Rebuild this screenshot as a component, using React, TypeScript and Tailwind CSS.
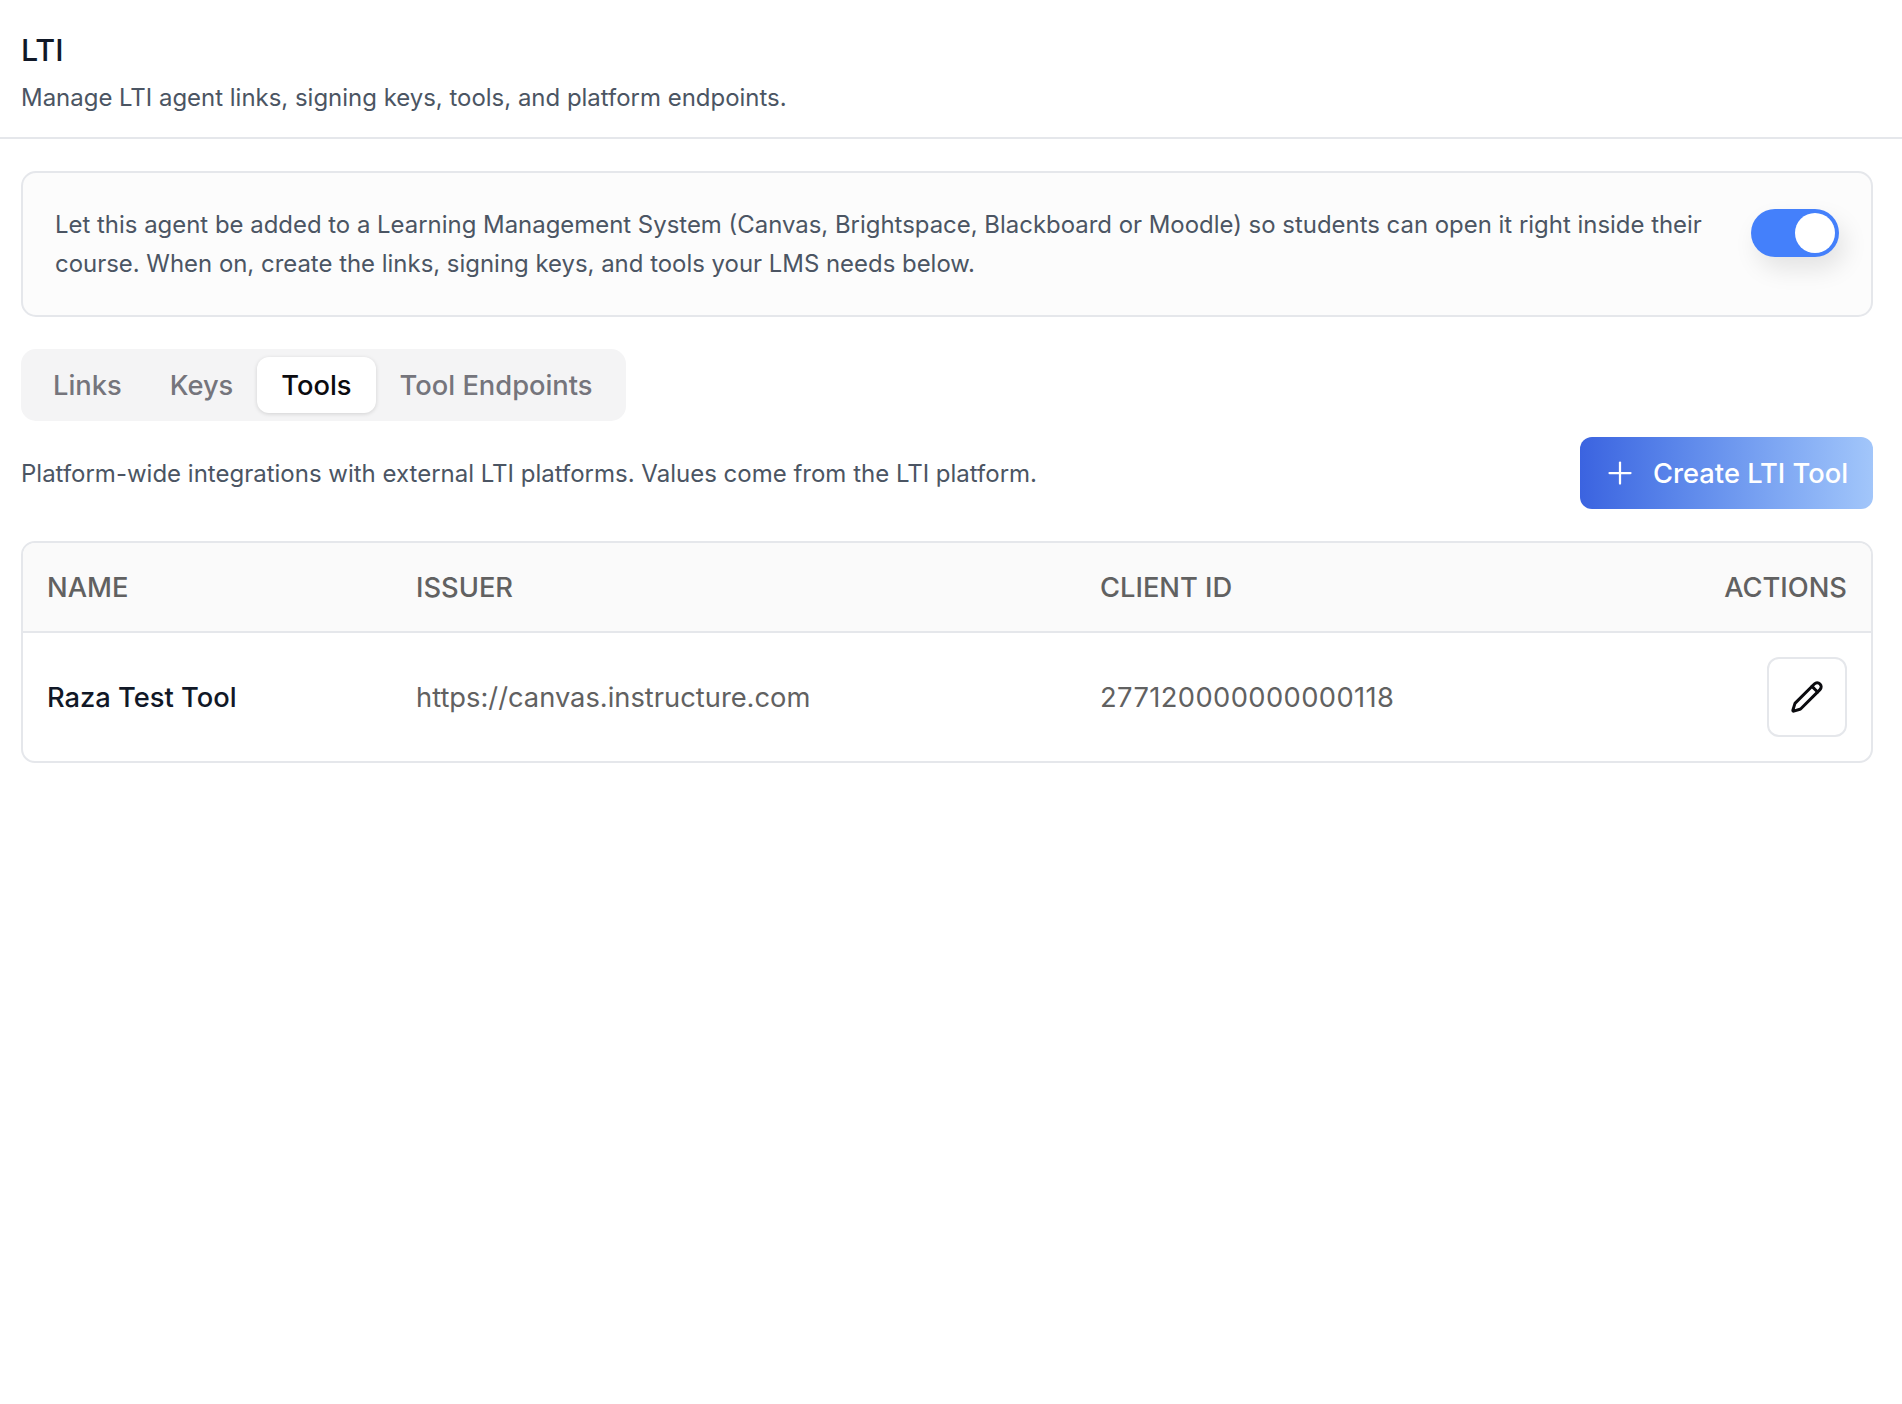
import { Plus } from "lucide-react";

const tabs = ["Links", "Keys", "Tools", "Tool Endpoints"];

export default function App() {
  return (
    <div className="min-h-[1404px] bg-white font-['Inter',sans-serif] text-[#4b5563]">
      <header className="h-[139px] border-b-2 border-[#e5e7eb] pl-[21px] pt-[30px]">
        <h1 className="text-[30.5px] leading-[40px] font-medium text-[#111827]">LTI</h1>
        <p className="mt-[10px] text-[23.96px] leading-[36px]">Manage LTI agent links, signing keys, tools, and platform endpoints.</p>
      </header>

      <main className="pl-[21px] pr-[29px] pt-[32px]">
        <section className="flex h-[146px] items-start justify-between rounded-[15px] border-2 border-[#e5e7eb] bg-[#fcfcfc] px-[32px] pt-[32px]">
          <p className="w-[1660px] text-[23.93px] leading-[39px]">
            Let this agent be added to a Learning Management System (Canvas, Brightspace, Blackboard or Moodle) so students can open it right inside their course. When on, create the links, signing keys, and tools your LMS needs below.
          </p>
          <button className="mt-[4px] flex h-[48px] w-[88px] items-center justify-end rounded-full bg-[#4480fb] pr-[4px] shadow-[6px_12px_24px_rgba(0,0,0,0.10)]">
            <span className="h-[40px] w-[40px] rounded-full bg-white" />
          </button>
        </section>

        <div className="mt-[32px] inline-flex h-[72px] items-center rounded-[15px] bg-[#f4f4f5] pl-[8px] pr-[9px] align-top">
          {tabs.map((t) => (
            <button
              key={t}
              className={
                t === "Tools"
                  ? "h-[56px] rounded-[12px] bg-white px-[24px] pt-[2px] text-[27.3px] font-medium text-[#0b0b0f] shadow-[0_1px_4px_rgba(0,0,0,0.14)]"
                  : "h-[56px] px-[24px] pt-[2px] text-[27.3px] font-medium text-[#75757c]"
              }
            >
              {t}
            </button>
          ))}
        </div>

        <div className="mt-[16px] flex h-[72px] items-center justify-between">
          <p className="pt-[2px] text-[24px] leading-[36px]">Platform-wide integrations with external LTI platforms. Values come from the LTI platform.</p>
          <button className="flex h-[72px] w-[293px] items-center gap-[15px] rounded-[12px] bg-gradient-to-r from-[#3b63e0] to-[#a2c6fa] pl-[22px] text-[27.3px] font-medium text-white">
            <Plus className="h-[36px] w-[36px]" strokeWidth={1.5} />
            <span className="pt-[2px]">Create LTI Tool</span>
          </button>
        </div>

        <div className="mt-[32px] overflow-hidden rounded-[14px] border-2 border-[#e5e7eb]">
          <table className="w-full table-fixed border-collapse">
            <thead>
              <tr className="h-[89px] border-b-2 border-[#e5e7eb] bg-[#fafafa] text-[27.3px] font-medium text-[#616161]">
                <th className="w-[393px] pl-[24px] pt-[2px] text-left font-medium">NAME</th>
                <th className="w-[684px] pt-[2px] text-left font-medium">ISSUER</th>
                <th className="pt-[2px] text-left font-medium">CLIENT ID</th>
                <th className="w-[300px] pr-[24px] pt-[2px] text-right font-medium">ACTIONS</th>
              </tr>
            </thead>
            <tbody>
              <tr className="h-[129px] text-[27.3px] text-[#616161]">
                <td className="pl-[24px] pt-[3px] font-medium text-[#111827]">Raza Test Tool</td>
                <td className="pt-[3px]">https://canvas.instructure.com</td>
                <td className="pt-[3px] tracking-[0.4px]">277120000000000118</td>
                <td className="pr-[24px]">
                  <button className="ml-auto flex h-[80px] w-[80px] items-center justify-center rounded-[12px] border-2 border-[#e5e7eb] bg-white">
                    <svg viewBox="0 0 24 24" fill="none" stroke="#0b0b0f" strokeWidth="2.1" strokeLinecap="round" strokeLinejoin="round" className="h-[34px] w-[34px]">
                      <path d="M21.17 6.81a1 1 0 0 0-3.99-3.99L3.84 16.17a2 2 0 0 0-.5.83l-1.32 4.35a.5.5 0 0 0 .62.62l4.35-1.32a2 2 0 0 0 .83-.5z" />
                      <path d="m15.5 4.5 4 4" />
                    </svg>
                  </button>
                </td>
              </tr>
            </tbody>
          </table>
        </div>
      </main>
    </div>
  );
}
